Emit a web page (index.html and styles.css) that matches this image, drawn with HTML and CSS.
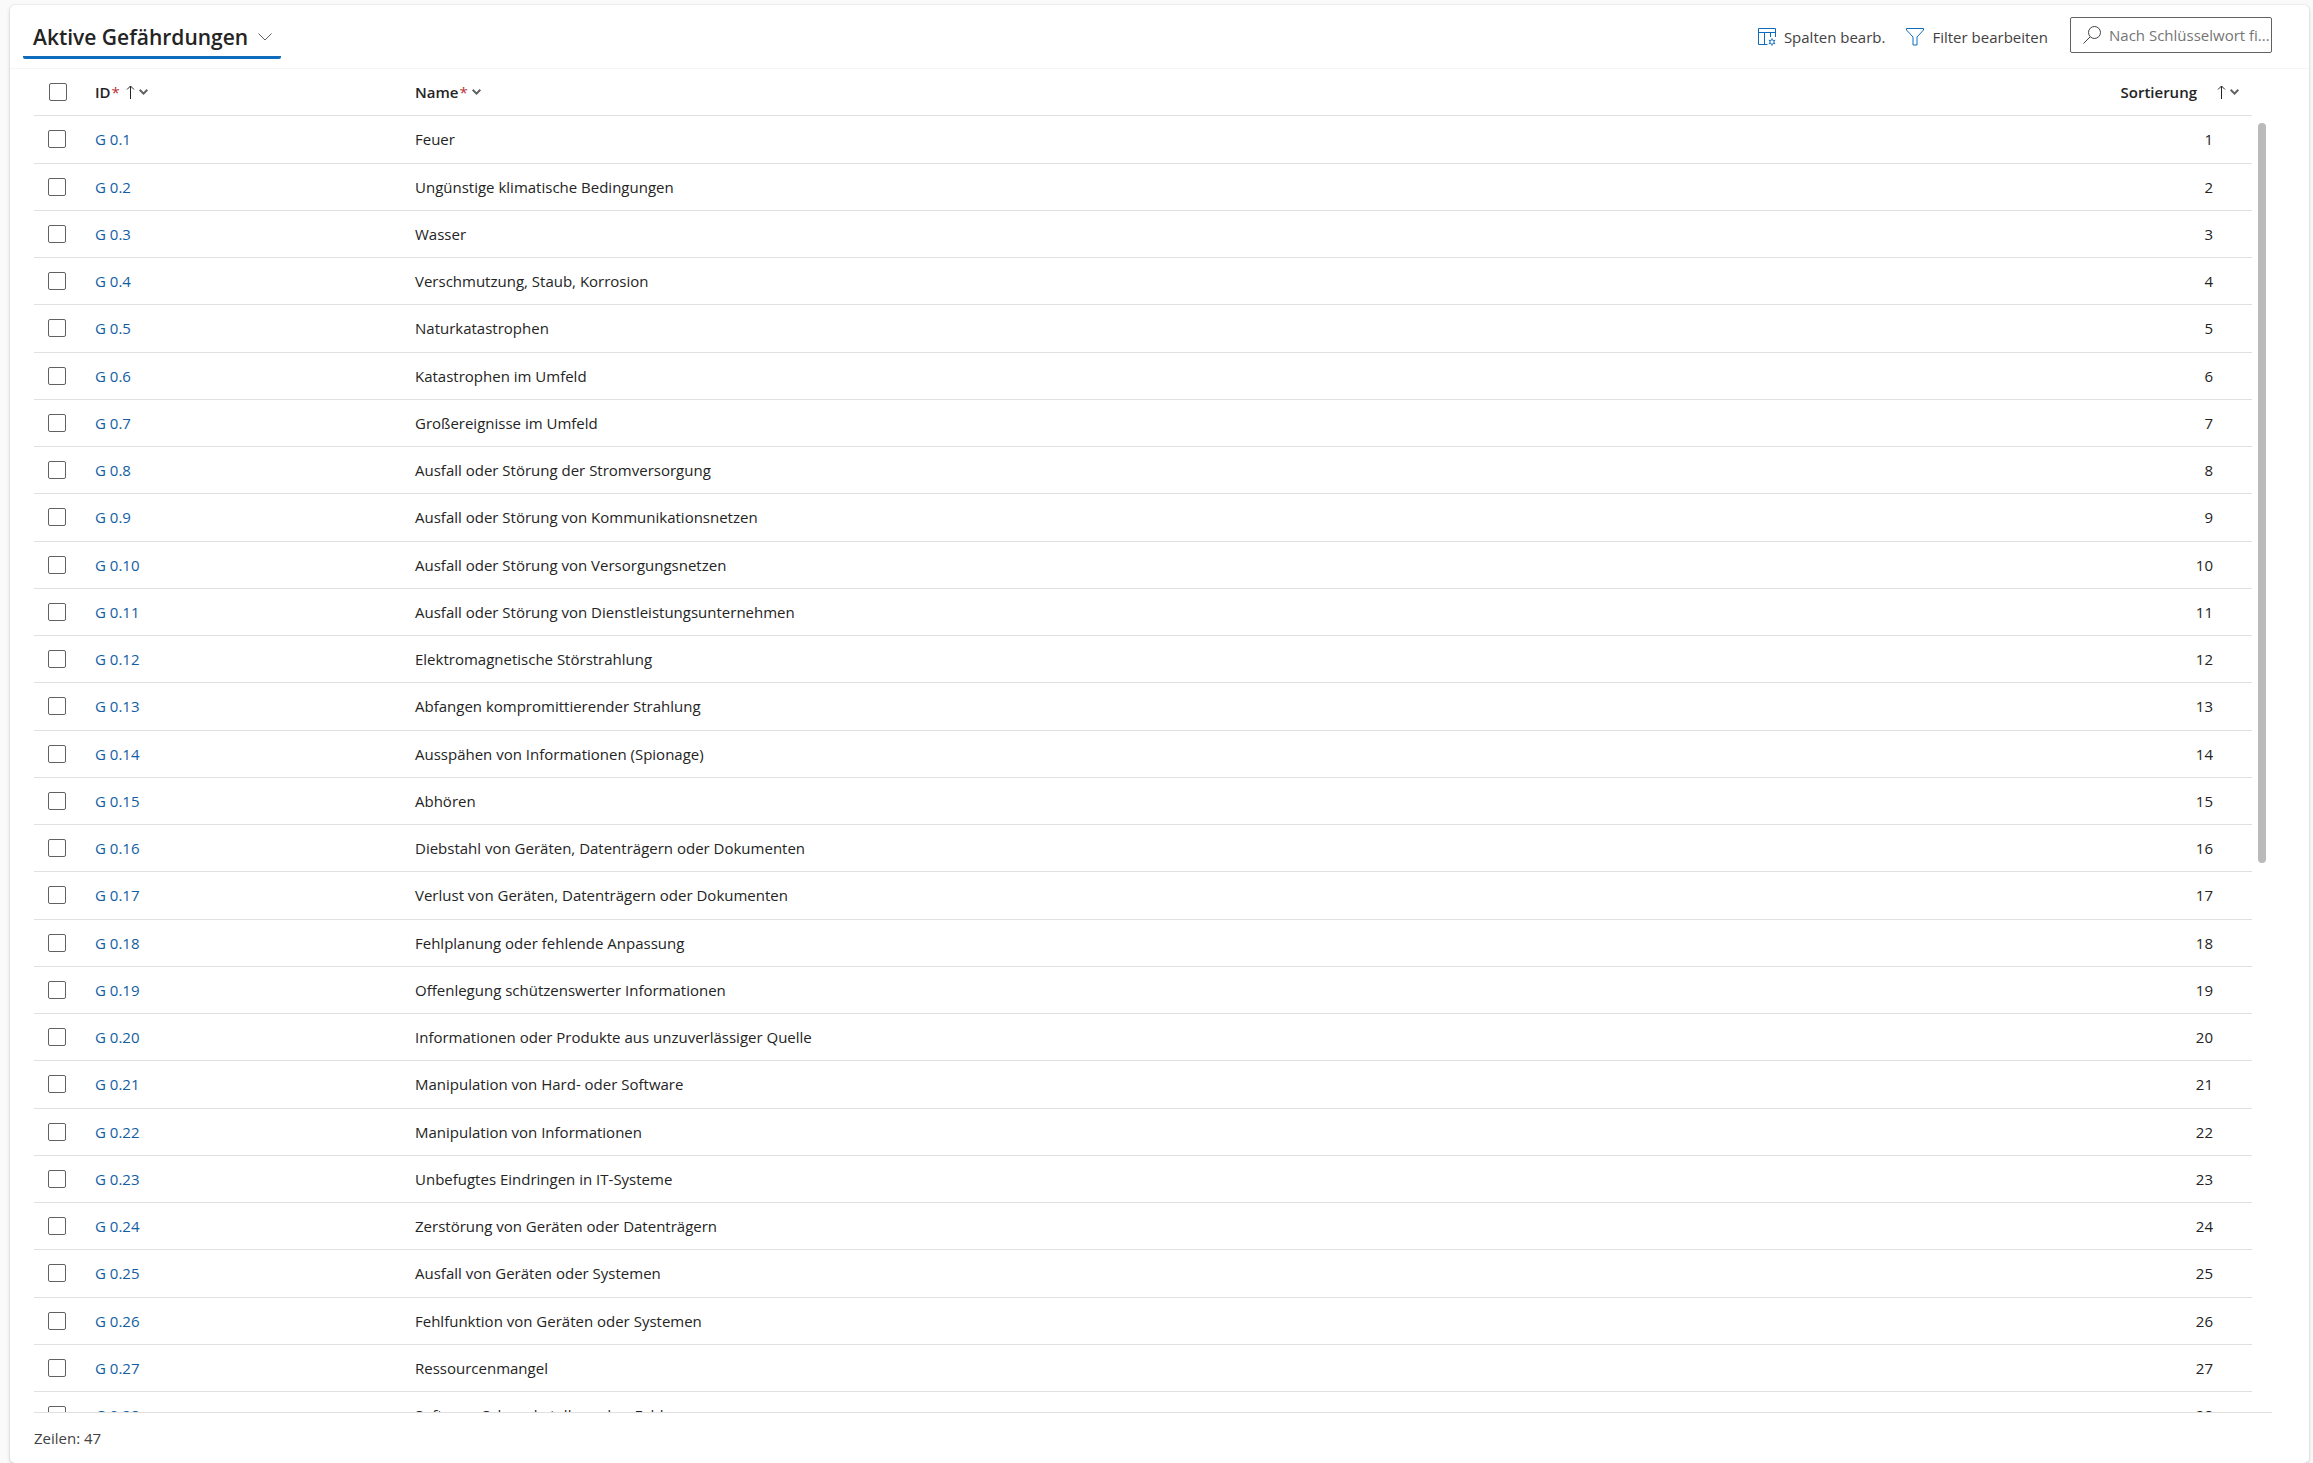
FILE: index.html
```html
<!DOCTYPE html>
<html lang="de">
<head>
    <meta charset="UTF-8">
    <meta name="viewport" content="width=device-width, initial-scale=1.0">
    <title>Aktive Gefährdungen</title>
    <link rel="stylesheet" href="styles.css">
</head>
<body>
    <main class="card">
        <header class="toolbar">
            <button class="view" type="button">
                <h1>Aktive Gefährdungen</h1>
                <svg width="14" height="8" viewBox="0 0 14 8"><path d="M.5.5 7 7 13.500.5"/></svg>
            </button>
            <div class="actions">
                <button class="command" type="button">
                    <svg width="20" height="20" viewBox="0 0 20 20">
                        <path d="M10.500 17.500h-9v-16h17V10M1.500 5.500h17M7.500 5.500v12M13.500 5.500V10"/>
                        <circle cx="15" cy="15" r="2.200"/>
                        <path d="M15 11.300v1.500M15 17.200v1.500M11.800 13.200l1.300.7M16.900 16.100l1.300.7M11.800 16.800l1.300-.7M16.900 13.900l1.300-.7"/>
                    </svg>
                    Spalten bearb.
                </button>
                <button class="command" type="button">
                    <svg width="20" height="20" viewBox="0 0 20 20"><path d="M1.500 1.500h17v1.500l-6.500 7v8H8v-8L1.500 3z"/></svg>
                    Filter bearbeiten
                </button>
                <label class="search">
                    <svg width="18" height="18" viewBox="0 0 18 18"><circle cx="11.500" cy="6.500" r="6"/><path d="M7.200 10.800.5 17.500"/></svg>
                    <input type="text" placeholder="Nach Schlüsselwort fi..." aria-label="Nach Schlüsselwort filtern">
                </label>
            </div>
        </header>

        <section class="grid">
            <div class="viewport">
                <table>
                    <colgroup>
                        <col class="col-check">
                        <col class="col-id">
                        <col>
                        <col class="col-sort">
                    </colgroup>
                    <thead>
                        <tr>
                            <th><input type="checkbox" aria-label="Alle auswählen"></th>
                            <th>
                                <div class="head">ID<span class="required">*</span>
                                    <svg class="arrow" width="9" height="14" viewBox="0 0 9 14"><path d="M4.500 14V1M1 4.500 4.500 1 8 4.500"/></svg>
                                    <svg class="chevron" width="9" height="6" viewBox="0 0 9 6"><path d="m.7.8 3.800 3.800L8.300.8"/></svg>
                                </div>
                            </th>
                            <th>
                                <div class="head">Name<span class="required">*</span>
                                    <svg class="chevron" width="9" height="6" viewBox="0 0 9 6"><path d="m.7.8 3.800 3.800L8.300.8"/></svg>
                                </div>
                            </th>
                            <th>
                                <div class="head head-right">Sortierung
                                    <svg class="arrow" width="9" height="14" viewBox="0 0 9 14"><path d="M4.500 14V1M1 4.500 4.500 1 8 4.500"/></svg>
                                    <svg class="chevron" width="9" height="6" viewBox="0 0 9 6"><path d="m.7.8 3.800 3.800L8.300.8"/></svg>
                                </div>
                            </th>
                        </tr>
                    </thead>
                    <tbody id="rows"></tbody>
                </table>
            </div>
            <div class="track"><div class="thumb"></div></div>
        </section>

        <footer class="status">Zeilen: 47</footer>
    </main>

    <script src="rows.js"></script>
</body>
</html>
```

FILE: styles.css
```css
* {
    box-sizing: border-box;
    margin: 0;
    padding: 0;
}

body {
    height: 100vh;
    padding: 5px 4px 0 10px;
    background-color: #fafafa;
    color: #242424;
    font-family: "Segoe UI", "Open Sans", "Noto Sans", sans-serif;
    font-size: 15px;
    line-height: 20px;
    overflow: hidden;
}

button,
input {
    font: inherit;
    color: inherit;
}

button {
    border: none;
    background: none;
    cursor: pointer;
}

svg {
    flex: none;
    fill: none;
    stroke: currentColor;
}

.card {
    display: flex;
    flex-direction: column;
    height: 100%;
    background-color: #fff;
    border-radius: 5px;
    box-shadow: 0 0 2px rgba(0, 0, 0, .14), 0 2px 4px rgba(0, 0, 0, .14);
}

/* toolbar */
.toolbar {
    display: flex;
    justify-content: space-between;
    align-items: flex-start;
    height: 64px;
    padding: 12px 37px 0 13px;
    border-bottom: 1px solid #f5f5f5;
}

.view {
    display: flex;
    align-items: center;
    gap: 10px;
    height: 42px;
    padding: 0 9px 0 10px;
    border-bottom: 3px solid #0f6cbd;
    border-radius: 2px;
}

.view h1 {
    font-size: 21px;
    font-weight: 600;
    line-height: 28px;
}

.view svg {
    color: #616161;
}

.actions {
    display: flex;
    gap: 20px;
}

.command {
    display: flex;
    align-items: center;
    gap: 7px;
    height: 40px;
    color: #424242;
}

.command svg {
    color: #0f6cbd;
}

.search {
    display: flex;
    align-items: center;
    gap: 8px;
    width: 202px;
    height: 36px;
    margin-left: 2px;
    padding-left: 12px;
    border: 1px solid #616161;
    border-radius: 2px;
    color: #424242;
}

.search input {
    flex: 1;
    min-width: 0;
    border: none;
    outline: none;
    background: none;
}

.search input::placeholder {
    color: #757575;
}

/* grid */
.grid {
    display: flex;
    flex: 1;
    gap: 6px;
    min-height: 0;
    margin: 0 37px 0 24px;
    border-bottom: 1px solid #e0e0e0;
}

.viewport {
    flex: 1;
    overflow: hidden;
}

table {
    width: 100%;
    table-layout: fixed;
    border-collapse: collapse;
}

.col-check {
    width: 48px;
}

.col-id {
    width: 320px;
}

.col-sort {
    width: 462px;
}

th,
td {
    height: 47px;
    padding: 0 13px;
    border-bottom: 1px solid #e0e0e0;
    text-align: left;
    vertical-align: middle;
}

th {
    height: 46px;
}

th:first-child,
td:first-child {
    padding: 0 14px;
}

/* every fourth row takes the rounding of the row height */
tr:nth-child(4n+1) td {
    height: 48px;
}

td:last-child {
    padding-right: 39px;
    text-align: right;
}

input[type="checkbox"] {
    display: block;
    width: 18px;
    height: 18px;
    border: 1px solid #616161;
    border-radius: 2px;
    appearance: none;
}

th input[type="checkbox"] {
    margin-left: 1px;
}

td a {
    color: #115ea3;
    text-decoration: none;
}

.head {
    display: flex;
    align-items: center;
    font-weight: 600;
}

.head-right {
    justify-content: flex-end;
}

.head-right .arrow {
    margin-left: 20px;
}

.required {
    margin-left: 1px;
    color: #bc2f32;
    font-weight: 400;
}

.arrow {
    margin-left: 6px;
}

.chevron {
    margin-left: 4px;
    stroke-width: 2;
    color: #616161;
}

.track {
    width: 8px;
    margin-right: 6px;
    padding-top: 54px;
}

/* 27 of 47 rows are in view */
.thumb {
    height: calc(100% * 27 / 47);
    border-radius: 4px;
    background-color: #bababa;
}

.status {
    height: 50px;
    padding: 15px 24px 0;
    color: #424242;
}
```

FILE: rows.js
```js
const names = [
    'Feuer',
    'Ungünstige klimatische Bedingungen',
    'Wasser',
    'Verschmutzung, Staub, Korrosion',
    'Naturkatastrophen',
    'Katastrophen im Umfeld',
    'Großereignisse im Umfeld',
    'Ausfall oder Störung der Stromversorgung',
    'Ausfall oder Störung von Kommunikationsnetzen',
    'Ausfall oder Störung von Versorgungsnetzen',
    'Ausfall oder Störung von Dienstleistungsunternehmen',
    'Elektromagnetische Störstrahlung',
    'Abfangen kompromittierender Strahlung',
    'Ausspähen von Informationen (Spionage)',
    'Abhören',
    'Diebstahl von Geräten, Datenträgern oder Dokumenten',
    'Verlust von Geräten, Datenträgern oder Dokumenten',
    'Fehlplanung oder fehlende Anpassung',
    'Offenlegung schützenswerter Informationen',
    'Informationen oder Produkte aus unzuverlässiger Quelle',
    'Manipulation von Hard- oder Software',
    'Manipulation von Informationen',
    'Unbefugtes Eindringen in IT-Systeme',
    'Zerstörung von Geräten oder Datenträgern',
    'Ausfall von Geräten oder Systemen',
    'Fehlfunktion von Geräten oder Systemen',
    'Ressourcenmangel',
    'Software-Schwachstellen oder -Fehler'
]

document.querySelector('#rows').innerHTML = names.map((name, i) => `
    <tr>
        <td><input type="checkbox" aria-label="G 0.${i + 1} auswählen"></td>
        <td><a href="#">G 0.${i + 1}</a></td>
        <td>${name}</td>
        <td>${i + 1}</td>
    </tr>`).join('')
```
